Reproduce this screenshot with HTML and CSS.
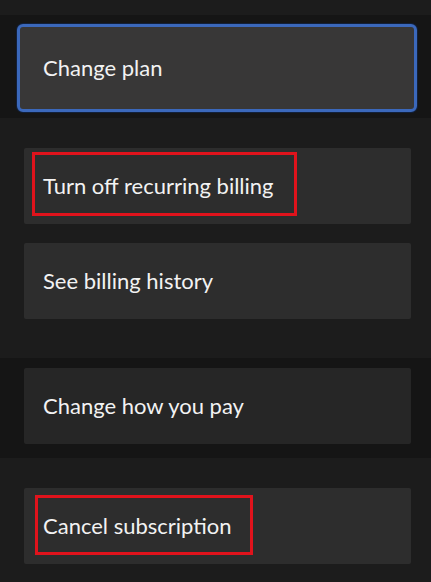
FILE: index.html
```html
<!DOCTYPE html>
<html lang="en">
<head>
  <meta charset="UTF-8">
  <meta name="viewport" content="width=device-width, initial-scale=1.0">
  <title>Manage subscription</title>
  <link rel="stylesheet" href="styles.css">
</head>
<body>
  <div class="menu">
    <div class="band band-top">
      <button class="card card-focus">Change plan</button>
    </div>
    <div class="group">
      <button class="card">
        Turn off recurring billing
        <span class="mark mark-billing"></span>
      </button>
      <button class="card">See billing history</button>
    </div>
    <div class="band band-pay">
      <button class="card card-dim">Change how you pay</button>
    </div>
    <div class="group">
      <button class="card">
        Cancel subscription
        <span class="mark mark-cancel"></span>
      </button>
    </div>
  </div>
</body>
</html>
```

FILE: styles.css
```css
body {
  margin: 0;
  background: #1c1c1c;
  color: #f2f2f2;
  font-family: Lato, "Noto Sans", sans-serif;
  height: 582px;
  overflow: hidden;
}
.menu {
  display: flex;
  flex-direction: column;
  padding-top: 15px;
}
.band {
  background: #151515;
  display: flex;
}
.band-top {
  padding: 9px 0 6px 17px;
  height: 88px;
}
.band-pay {
  margin-top: 39px;
  padding: 10px 0 14px 24px;
}
.group {
  display: flex;
  flex-direction: column;
  gap: 19px;
  padding-left: 24px;
  margin-top: 30px;
}
.card {
  position: relative;
  display: flex;
  align-items: center;
  width: 387px;
  height: 76px;
  box-sizing: border-box;
  padding: 0 0 2px 19px;
  background: #2d2d2d;
  border: none;
  border-radius: 2px;
  color: inherit;
  font-family: inherit;
  font-size: 22px;
  text-align: left;
  cursor: pointer;
}
.card-focus {
  width: 400px;
  height: 88px;
  padding-left: 23px;
  background: #383737;
  border: 3px solid #3b68bb;
  border-radius: 6px;
  box-shadow: 0 0 0 1px #12203a;
}
.card-dim {
  background: #262626;
}
.mark {
  position: absolute;
  border: 3px solid #e0131c;
  box-sizing: border-box;
  pointer-events: none;
}
.mark-billing {
  left: 8px;
  top: 4px;
  width: 265px;
  height: 64px;
}
.mark-cancel {
  left: 11px;
  top: 7px;
  width: 218px;
  height: 60px;
}
```
